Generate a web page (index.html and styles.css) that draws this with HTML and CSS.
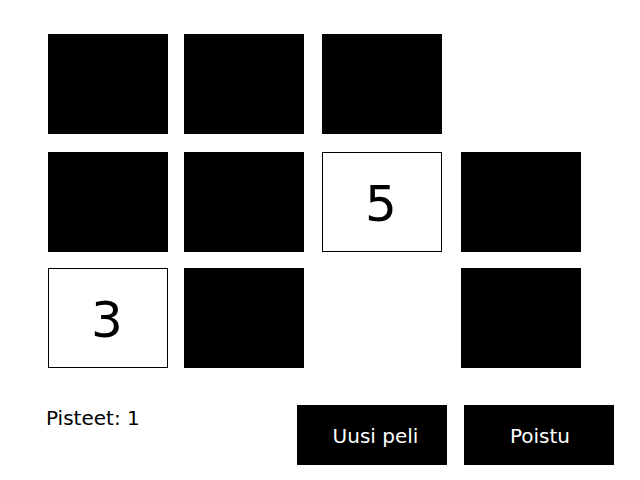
FILE: index.html
```html
<!DOCTYPE html>
<html lang="fi">
<head>
<meta charset="utf-8">
<meta name="viewport" content="width=device-width, initial-scale=1">
<title>Muistipeli</title>
<link rel="stylesheet" href="styles.css">
</head>
<body>
<main class="game">
  <div class="board">
    <button class="card" type="button" aria-label="Kortti 1"></button>
    <button class="card" type="button" aria-label="Kortti 2"></button>
    <button class="card" type="button" aria-label="Kortti 3"></button>
    <span class="empty"></span>
    <button class="card" type="button" aria-label="Kortti 5"></button>
    <button class="card" type="button" aria-label="Kortti 6"></button>
    <button class="card open" type="button">5</button>
    <button class="card" type="button" aria-label="Kortti 8"></button>
    <button class="card open" type="button">3</button>
    <button class="card" type="button" aria-label="Kortti 10"></button>
    <span class="empty"></span>
    <button class="card" type="button" aria-label="Kortti 12"></button>
  </div>
  <footer class="bar">
    <p class="score">Pisteet: 1</p>
    <div class="actions">
      <button class="action new-game" type="button">Uusi peli</button>
      <button class="action" type="button">Poistu</button>
    </div>
  </footer>
</main>
</body>
</html>
```
FILE: styles.css
```css
* {
  box-sizing: border-box;
}

body {
  margin: 0;
  background: #fff;
  color: #000;
  font-family: "DejaVu Sans", sans-serif;
}

button {
  margin: 0;
  padding: 0;
  border: 1px solid #000;
  border-radius: 0;
  background: #000;
  color: #fff;
  font-family: inherit;
}

.game {
  padding: 34px 26px 15px 46px;
}

/* Each track holds a card and the space after it. */
.board {
  display: grid;
  grid-template-columns: 136fr 138fr 139fr 120fr;
  grid-template-rows: 118px 116px 100px;
  margin: 0 33px 37px 2px;
}

.card {
  width: 120px;
  height: 100px;
}

.card.open {
  padding-right: 2px;
  padding-top: 4px;
  background: #fff;
  color: #000;
  font-size: 50px;
  line-height: 60px;
}

.bar {
  display: flex;
  justify-content: space-between;
  align-items: flex-start;
}

.score {
  margin: 0;
  font-size: 20px;
  line-height: 26px;
}

.actions {
  display: flex;
  gap: 17px;
}

.action {
  width: 150px;
  height: 60px;
  padding-top: 2px;
  padding-left: 2px;
  font-size: 20px;
}

.new-game {
  padding-left: 7px;
}
```
